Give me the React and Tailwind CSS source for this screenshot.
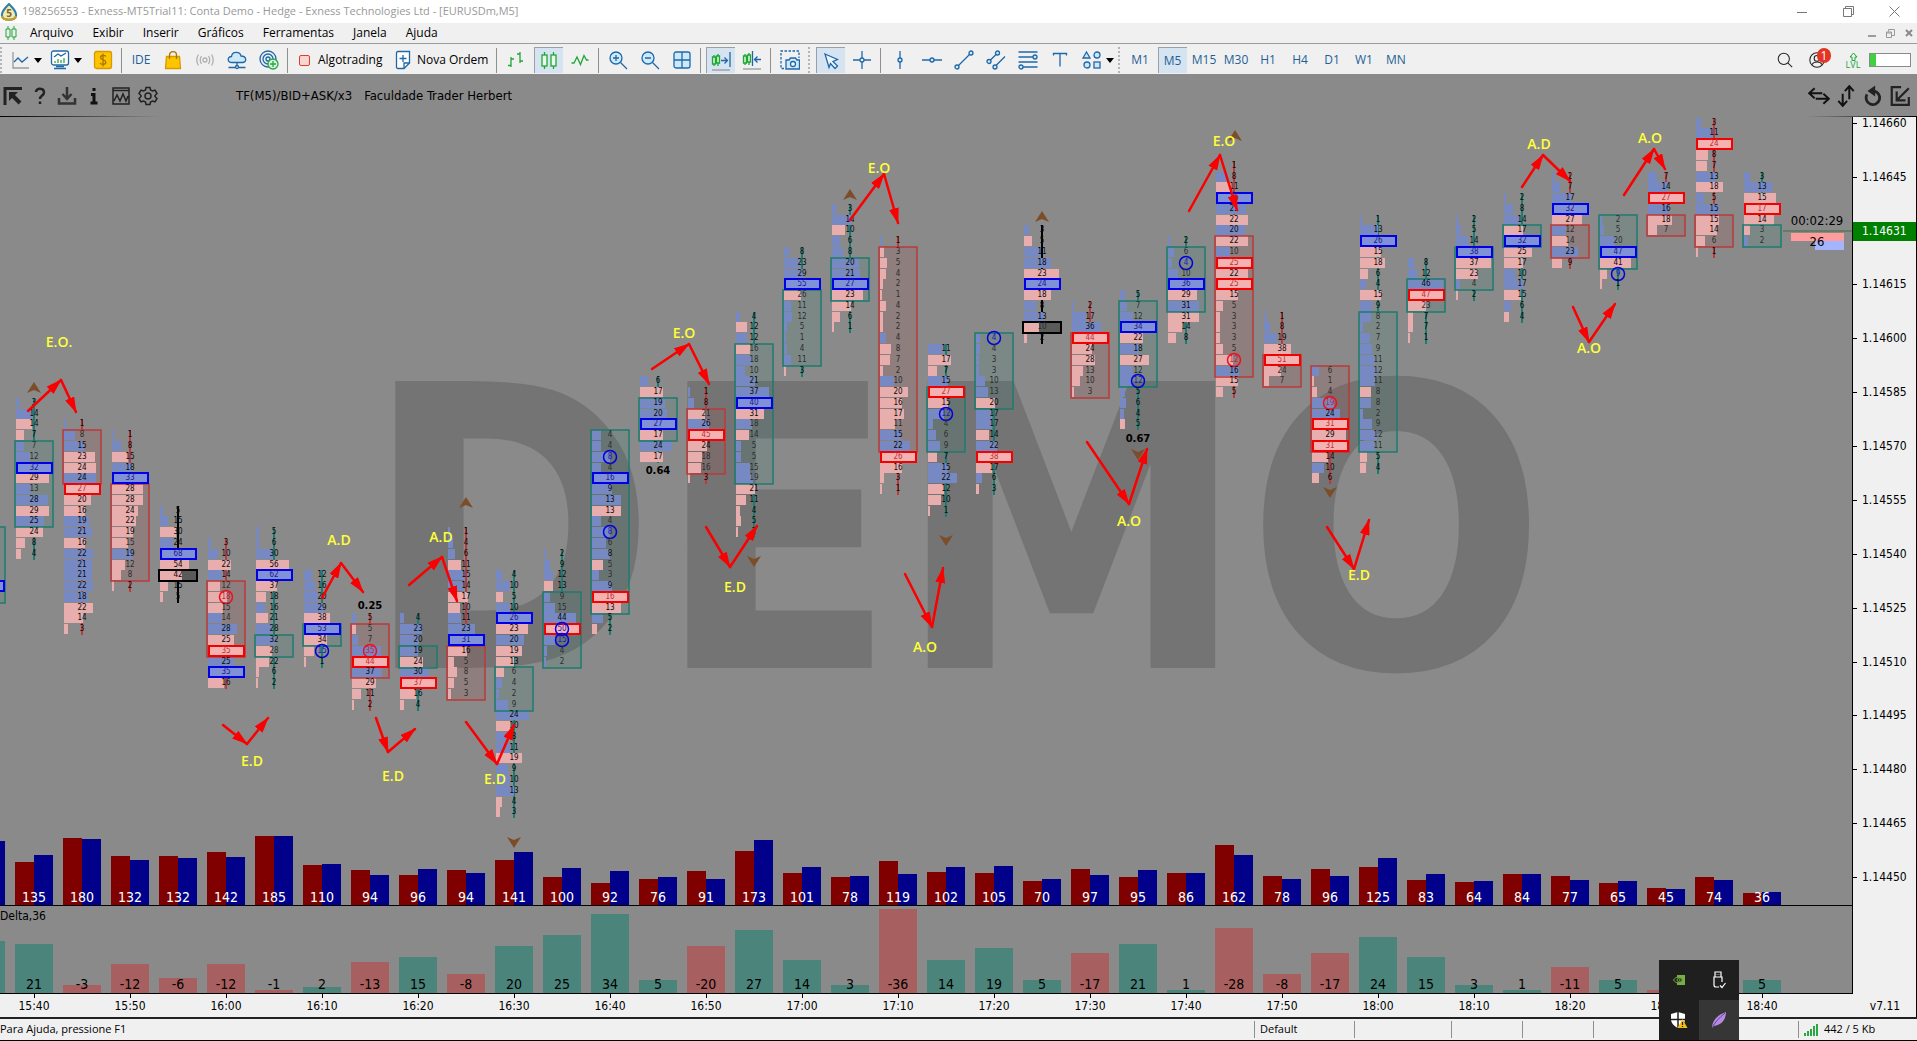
import React from 'react';
import clsx from 'clsx';

const COL_STEP = 48;
const COL_CENTER = 34;
const PLOT_TOP = 117;
const VOLUME_BASE = 906;

// b = buy row, p = sell row, upper case = point of control,
// trailing "o" = blue imbalance ring, trailing "r" = red imbalance ring
const COLUMNS = [
  { col: -1, row: 38, tone: 'up', body: [0, 6], cells: 'b4 b4 b5 b6 b8 B20 b9' },
  { col: 0, row: 26, tone: 'up', body: [4, 11], cells: 'b3 b14 p14 p7 b7 b12 B32 p29 b13 b28 p29 b25 p24 p8 p4' },
  { col: 1, row: 28, tone: 'down', body: [1, 5], cells: 'b1 b8 b15 p23 p24 b24 P27 p20 p16 b19 b21 p16 b22 b21 b21 b22 b18 p22 p14 p3' },
  { col: 2, row: 29, tone: 'down', body: [5, 13], cells: 'b1 b8 p15 b18 B33 p28 p28 p24 p22 p19 p15 b19 p12 p8 p2' },
  { col: 3, row: 36, tone: 'flat', body: [6, 6], cells: 'b5 b15 p30 b24 B68 p54 p42 p15 p5' },
  { col: 4, row: 39, tone: 'down', body: [4, 10], cells: 'b3 b10 p22 b14 p12 p18r p15 b14 b28 p25 P35 b25 B35 p16' },
  { col: 5, row: 38, tone: 'up', body: [10, 11], cells: 'b5 b6 b30 p56 B62 p37 p18 b16 p21 b28 b32 p28 p22 p6 p2' },
  { col: 6, row: 42, tone: 'up', body: [5, 6], cells: 'b12 b16 b20 b29 p38 B53 p34 p15o p1' },
  { col: 7, row: 46, tone: 'down', body: [1, 5], cells: 'b5 p5 b7 b35r P44 b37 p29 p11 p2' },
  { col: 8, row: 46, tone: 'up', body: [3, 4], cells: 'b4 b23 b20 b19 p24 b30 P37 p16 p4' },
  { col: 9, row: 38, tone: 'down', body: [11, 15], cells: 'b1 b4 b6 p11 b15 b14 p17 p10 b11 b23 B31 p16 p5 p8 p5 p3' },
  { col: 10, row: 42, tone: 'up', body: [9, 12], cells: 'b4 b10 p5 b10 B26 p23 b20 p19 p13 p6 b4 b2 b9 b24 p10 b8 b11 p19 b9 b10 b13 p4 p3' },
  { col: 11, row: 40, tone: 'up', body: [4, 10], cells: 'b2 b9 b12 p13 b9 b15 b44 P50o b15o b4 b2' },
  { col: 12, row: 29, tone: 'up', body: [0, 16], cells: 'b4 b4 b8o b4 B16 b9 b13 p13 b4 b8o b6 b8 p5 b3 b9 P16 p13 b5 p2' },
  { col: 13, row: 24, tone: 'up', body: [2, 5], cells: 'b6 p17 b19 b20 B27 p17 b24 p17' },
  { col: 14, row: 25, tone: 'down', body: [2, 7], cells: 'b1 b8 p21 b26 P45 p24 p18 p16 p3' },
  { col: 15, row: 18, tone: 'up', body: [3, 15], cells: 'b4 p12 b12 p16 b18 b10 b21 b37 B40 p31 b18 p14 b5 b5 b15 b19 p21 p11 p4 p5 p2' },
  { col: 16, row: 12, tone: 'up', body: [4, 10], cells: 'b8 b23 b29 B55 p26 b11 b12 b5 b1 b4 b11 p3' },
  { col: 17, row: 8, tone: 'up', body: [5, 8], cells: 'b3 b14 p10 b6 b8 b20 b21 B27 p23 p14 p6 p1' },
  { col: 18, row: 11, tone: 'down', body: [1, 19], cells: 'b1 p3 p5 p4 p2 p1 p4 p2 p2 b4 p8 p7 p2 b10 p20 p16 p17 p11 b15 b22 P26 p16 p3 p1' },
  { col: 19, row: 21, tone: 'up', body: [4, 9], cells: 'b11 p17 p7 b15 P27 p15 b12o b4 b6 b9 p7 b15 b22 p12 p10 p1' },
  { col: 20, row: 20, tone: 'up', body: [0, 6], cells: 'b4o b4 b3 b3 b10 b13 p20 b17 b17 p14 b22 P38 p17 b6 p3' },
  { col: 21, row: 10, tone: 'flat', body: [9, 9], cells: 'b3 p5 b11 b18 p23 B24 p18 b8 b13 p10 p2' },
  { col: 22, row: 17, tone: 'down', body: [3, 8], cells: 'b2 b17 b36 P44 p24 p28 p13 p10 p3' },
  { col: 23, row: 16, tone: 'up', body: [1, 8], cells: 'b5 b7 b12 B34 p22 b18 p27 b12 b12o b5 b6 b4 p5' },
  { col: 24, row: 11, tone: 'up', body: [1, 6], cells: 'b2 b6 b4o b10 B36 p29 b31 p31 p14 p8' },
  { col: 25, row: 4, tone: 'down', body: [7, 19], cells: 'b1 b8 p11 B25 b21 p22 b20 p22 b10 P25 p22 P25 p15 p5 p3 p3 p3 p5 p12r b16 p15 p5' },
  { col: 26, row: 18, tone: 'down', body: [4, 6], cells: 'b1 b8 b19 p38 P51 p24 p7' },
  { col: 27, row: 23, tone: 'down', body: [0, 7], cells: 'b6 p1 p4 b19r b24 P31 p29 P31 p14 b10 p6' },
  { col: 28, row: 9, tone: 'up', body: [9, 21], cells: 'b1 b13 B26 p15 p18 p6 b4 p15 b9 b8 b2 b7 b9 b11 b12 b11 p8 b8 b2 b9 b12 b11 p5 p4' },
  { col: 29, row: 13, tone: 'up', body: [2, 4], cells: 'b8 b12 b46 P47 p23 p7 p7 p1' },
  { col: 30, row: 9, tone: 'up', body: [3, 6], cells: 'b2 b5 b14 B38 p37 p23 b4 p2' },
  { col: 31, row: 7, tone: 'up', body: [3, 4], cells: 'b2 b8 b14 p17 B32 p25 p17 b10 b17 p15 b6 p4' },
  { col: 32, row: 5, tone: 'down', body: [5, 7], cells: 'b2 b7 b17 B32 p27 b12 p14 b23 p9' },
  { col: 33, row: 9, tone: 'up', body: [0, 4], cells: 'b2 b5 b20 B47 p41 p9o p1' },
  { col: 34, row: 5, tone: 'down', body: [4, 5], cells: 'b7 b14 P27 b16 p18 p7' },
  { col: 35, row: 0, tone: 'down', body: [9, 11], cells: 'b3 b11 P24 p8 p7 b13 p18 b5 b15 p15 p14 p6 p1' },
  { col: 36, row: 5, tone: 'up', body: [5, 6], cells: 'b3 b13 p15 P17 p14 p3 b2' },
];

// [total volume, sell bar height, buy bar height, delta]
const BARS = [
  [135, 44, 51, 21], [180, 68, 67, -3], [132, 50, 46, -12], [132, 50, 48, -6], [142, 54, 49, -12],
  [185, 70, 70, -1], [110, 41, 42, 2], [94, 36, 31, -13], [96, 31, 37, 15], [94, 36, 33, -8],
  [141, 46, 54, 20], [100, 29, 38, 25], [92, 23, 35, 34], [76, 27, 29, 5], [91, 35, 27, -20],
  [173, 55, 66, 27], [101, 33, 39, 14], [78, 29, 30, 3], [119, 45, 32, -36], [102, 34, 39, 14],
  [105, 33, 40, 19], [70, 25, 27, 5], [97, 37, 31, -17], [95, 29, 36, 21], [86, 33, 33, 1],
  [162, 61, 51, -28], [78, 30, 27, -8], [96, 37, 30, -17], [125, 39, 48, 24], [83, 26, 32, 15],
  [64, 24, 25, 3], [84, 32, 32, 1], [77, 30, 26, -11], [65, 23, 25, 5], [45, 18, 17, -1],
  [74, 29, 26, 2], [36, 13, 14, 5],
];

const TIMES = [
  '15:40', '15:50', '16:00', '16:10', '16:20', '16:30', '16:40', '16:50', '17:00', '17:10',
  '17:20', '17:30', '17:40', '17:50', '18:00', '18:10', '18:20', '18:30', '18:40',
];

const PRICES = [
  '1.14660', '1.14645', '1.14630', '1.14615', '1.14600', '1.14585', '1.14570', '1.14555',
  '1.14540', '1.14525', '1.14510', '1.14495', '1.14480', '1.14465', '1.14450',
];

const NOTES = [
  ['E.O.', 59, 342], ['A.D', 339, 540], ['E.D', 252, 761], ['E.D', 393, 776], ['A.D', 441, 537],
  ['E.D', 495, 779], ['E.D', 735, 587], ['E.O', 684, 333], ['E.O', 879, 168], ['E.O', 1224, 141],
  ['A.O', 1129, 521], ['A.O', 925, 647], ['E.D', 1359, 575], ['A.D', 1539, 144], ['A.O', 1650, 138],
  ['A.O', 1589, 348],
];

const SWINGS = [
  [28, 411, 61, 380, 76, 412], [322, 598, 341, 563, 363, 592], [223, 725, 247, 744, 268, 718],
  [376, 718, 388, 752, 415, 729], [409, 585, 442, 557, 457, 601], [466, 722, 497, 764, 514, 725],
  [706, 527, 730, 567, 757, 526], [652, 369, 689, 344, 709, 384], [850, 220, 884, 174, 898, 223],
  [1189, 211, 1220, 155, 1237, 210], [1087, 442, 1129, 504, 1147, 449], [905, 574, 932, 627, 943, 568],
  [1327, 527, 1354, 569, 1369, 520], [1522, 187, 1543, 155, 1570, 181], [1624, 195, 1654, 149, 1665, 169],
  [1573, 307, 1589, 342, 1615, 304],
];

const FRACTALS_UP = [[34, 388], [466, 503], [850, 195], [1042, 217], [1235, 136]];
const FRACTALS_DOWN = [[514, 842], [754, 561], [946, 540], [1138, 454], [1330, 492]];
const RATIOS = [['0.25', 370, 605], ['0.64', 658, 470], ['0.67', 1138, 438]];

const TONES = {
  up: { line: '#1c7c6f', fill: '#1c7c6f', alpha: 0.12 },
  down: { line: '#bb3a3a', fill: '#a05050', alpha: 0.2 },
  flat: { line: '#000000', fill: '#000000', alpha: 0.35 },
};

const rowY = (row) => Math.round(122.7 + row * 10.776);

const parseCells = (cells) =>
  cells.split(' ').map((cell) => {
    const [, side, value, ring] = cell.match(/^([bpBP])(\d+)([or]?)$/);
    return {
      buy: side.toLowerCase() === 'b',
      poc: side === side.toUpperCase(),
      value: Number(value),
      ring,
    };
  });

const Cluster = ({ col, row, tone, body, cells }) => {
  const rows = parseCells(cells);
  const max = Math.max(...rows.map((r) => r.value));
  const cx = COL_CENTER + col * COL_STEP;
  const left = cx - 18;
  const top = rowY(row) - 5;
  const bottom = rowY(row + rows.length - 1) + 6;
  const bodyTop = rowY(row + body[0]) - 5;
  const bodyBottom = rowY(row + body[1]) + 6;
  const { line, fill, alpha } = TONES[tone];

  return (
    <g>
      <path
        d={`M${cx} ${top}V${bodyTop}M${cx} ${bodyBottom}V${bottom}`}
        stroke={line}
        strokeWidth={2}
      />
      <rect x={left - 1} y={bodyTop} width={38} height={bodyBottom - bodyTop} fill={fill} fillOpacity={alpha} />
      {rows.map((r, i) => (
        <rect
          key={i}
          x={left}
          y={rowY(row + i) - 5}
          width={Math.max(2, Math.round((36 * r.value) / max))}
          height={10}
          fill={r.buy ? '#7789c2' : '#e8adad'}
        />
      ))}
      <rect x={left - 1} y={bodyTop} width={38} height={bodyBottom - bodyTop} fill="none" stroke={line} strokeWidth={tone === 'flat' ? 2 : 1.5} />
      {rows.map((r, i) => {
        const y = rowY(row + i);
        const soft = i >= body[0] && i <= body[1] && r.value / max < 0.5;
        let ink = soft ? '#2c2c2c' : '#0a0a0a';
        if (r.poc) ink = r.buy ? '#1a1a8c' : '#c03030';
        if (r.ring) ink = r.ring === 'o' ? '#1a1ac0' : '#c8203a';
        return (
          <g key={i}>
            {r.poc && (
              <rect x={left + 1} y={y - 5} width={35} height={10} fill={r.buy ? '#8a9aee' : '#ffb8b8'} fillOpacity={0.5} stroke={r.buy ? '#0000e6' : '#f40000'} strokeWidth={2} />
            )}
            {cx > 0 && (
              <text x={cx} y={y + 2} textAnchor="middle" fontSize={8} fill={ink}>
                {r.value}
              </text>
            )}
            {r.ring && <circle cx={cx} cy={y} r={6.5} fill="none" stroke={r.ring === 'o' ? '#0000e0' : '#f01020'} strokeWidth={1.5} />}
          </g>
        );
      })}
    </g>
  );
};

const PricePlot = () => (
  <svg className="absolute inset-0 h-full w-full" fontFamily="'DejaVu Sans Condensed', 'Noto Sans', sans-serif">
    <defs>
      <marker id="swing-head" viewBox="0 0 16 10" refX="15" refY="5" markerWidth="16" markerHeight="10" markerUnits="userSpaceOnUse" orient="auto">
        <path d="M0 0L16 5L0 10Z" fill="#fa0000" />
      </marker>
    </defs>
    <g transform={`translate(0 ${-PLOT_TOP})`}>
      <text x={364} y={667} fontSize={391} fontWeight={700} fill="#747474" stroke="#747474" strokeWidth={2}>
        DEMO
      </text>

      {FRACTALS_UP.map(([x, y]) => (
        <path key={x} d={`M${x} ${y - 6}L${x + 7} ${y + 5}L${x} ${y + 2}L${x - 7} ${y + 5}Z`} fill="#7c4d29" />
      ))}
      {FRACTALS_DOWN.map(([x, y]) => (
        <path key={x} d={`M${x} ${y + 6}L${x + 7} ${y - 5}L${x} ${y - 2}L${x - 7} ${y - 5}Z`} fill="#7c4d29" />
      ))}

      {COLUMNS.map((column) => (
        <Cluster key={column.col} {...column} />
      ))}

      {RATIOS.map(([label, x, y]) => (
        <text key={label} x={x} y={y + 4} textAnchor="middle" fontSize={10} fontWeight={700} fontFamily="'DejaVu Sans', sans-serif">
          {label}
        </text>
      ))}

      {SWINGS.map(([x1, y1, x2, y2, x3, y3]) => (
        <g key={x1} stroke="#fa0000" strokeWidth={2.5} strokeLinecap="round">
          <line x1={x1} y1={y1} x2={x2} y2={y2} markerEnd="url(#swing-head)" />
          <line x1={x2} y1={y2} x2={x3} y2={y3} markerEnd="url(#swing-head)" />
        </g>
      ))}
      {NOTES.map(([label, x, y]) => (
        <text key={x} x={x} y={y + 5} textAnchor="middle" fontSize={14} fontWeight={600} fill="#ffff38" fontFamily="'Open Sans', 'Noto Sans', sans-serif">
          {label}
        </text>
      ))}

      {/* volume histogram */}
      <rect x={-14} y={VOLUME_BASE - 65} width={19} height={65} fill="#00008b" />
      {BARS.map(([total, sell, buy], i) => {
        const x = COL_CENTER + i * COL_STEP;
        return (
          <g key={i}>
            <rect x={x - 19} y={VOLUME_BASE - sell} width={19} height={sell} fill="#800000" />
            <rect x={x} y={VOLUME_BASE - buy} width={19} height={buy} fill="#00008b" />
            <text x={x} y={902} textAnchor="middle" fontSize={14} fill="#ffffff">
              {total}
            </text>
          </g>
        );
      })}

      {/* last price */}
      <line x1={1783} y1={231} x2={1900} y2={231} stroke="#3f6f3f" />
      <text x={1817} y={225} textAnchor="middle" fontSize={13}>00:02:29</text>
      <rect x={1791} y={233} width={53} height={8} fill="#ff9c9c" />
      <rect x={1815} y={241} width={29} height={9} fill="#a4b4ff" />
      <text x={1817} y={246} textAnchor="middle" fontSize={13}>26</text>
    </g>
  </svg>
);

const DeltaPlot = () => (
  <svg className="absolute inset-0 h-full w-full" fontFamily="'DejaVu Sans Condensed', 'Noto Sans', sans-serif">
    <text x={0} y={14} fontSize={12}>Delta,36</text>
    <rect x={-33} y={35} width={38} height={52} fill="#4b847b" />
    {BARS.map(([, , , delta], i) => {
      const x = COL_CENTER + i * COL_STEP;
      const height = Math.round(Math.abs(delta) * 2.3 + 1);
      return (
        <g key={i}>
          <rect x={x - 19} y={87 - height} width={38} height={height} fill={delta > 0 ? '#4b847b' : '#a85f5f'} />
          <text x={x} y={83} textAnchor="middle" fontSize={14}>
            {delta}
          </text>
        </g>
      );
    })}
  </svg>
);

const PriceAxis = () => (
  <div className="relative w-[65px] shrink-0 border-r border-l border-black bg-[#f0f0f0]">
    <svg className="absolute inset-0 h-full w-full" fontFamily="'DejaVu Sans Condensed', 'Noto Sans', sans-serif" fontSize={12}>
      {PRICES.filter((price) => price !== '1.14630').map((price) => {
        const y = rowY(PRICES.indexOf(price) * 5) - PLOT_TOP;
        return (
          <g key={price}>
            <line x1={0} y1={y + 0.5} x2={4} y2={y + 0.5} stroke="#000" />
            <text x={9} y={y + 4}>{price}</text>
          </g>
        );
      })}
      <rect x={0} y={105} width={64} height={19} fill="#008000" />
      <text x={9} y={118} fill="#ffffff">1.14631</text>
    </svg>
  </div>
);

const TimeAxis = () => (
  <div className="relative h-[23px] shrink-0 border-r border-black bg-[#f0f0f0]">
    <svg className="absolute inset-0 h-full w-full" fontFamily="'DejaVu Sans Condensed', 'Noto Sans', sans-serif" fontSize={12}>
      {TIMES.map((time, i) => {
        const x = COL_CENTER + i * COL_STEP * 2;
        return (
          <g key={time}>
            <line x1={x + 0.5} y1={0} x2={x + 0.5} y2={4} stroke="#000" />
            <text x={x} y={16} textAnchor="middle">{time}</text>
          </g>
        );
      })}
      <text x={1885} y={16} textAnchor="middle">v7.11</text>
    </svg>
  </div>
);

const Icon = ({ children, size = 20, stroke = '#1f68a8', width = 1.3 }) => (
  <svg width={size} height={size} viewBox="0 0 20 20" fill="none" stroke={stroke} strokeWidth={width} className="shrink-0">
    {children}
  </svg>
);

const Caret = () => (
  <svg width="8" height="5" viewBox="0 0 8 5" className="shrink-0">
    <path d="M0 0H8L4 5Z" fill="#000" />
  </svg>
);

const Tool = ({ label, active, wide, children }) => (
  <button
    type="button"
    aria-label={label}
    className={clsx('flex h-full shrink-0 items-center justify-center', wide ? 'w-10 gap-1 pl-1' : 'w-8')}
  >
    <span
      className={clsx(
        'flex h-[26px] items-center justify-center',
        active ? 'w-[29px] border-t border-l border-[#9aa0a8] bg-[#d6e3f1]' : 'gap-1'
      )}
    >
      {children}
    </span>
  </button>
);

const Sep = () => (
  <div className="flex h-full w-1.5 shrink-0 items-center pl-0.5">
    <div className="h-[25px] w-px bg-[#8f8f8f]" />
  </div>
);

const Grip = () => (
  <div className="flex h-full w-2 shrink-0 items-center pl-0.5">
    <div className="h-[26px] border-l-2 border-dotted border-[#b4b4b4]" />
  </div>
);

const LIGHT = '#cde9fb';

const Toolbar = () => (
  <div className="flex h-[30px] shrink-0 items-center bg-[#f0f0f0] pt-0.5 text-[#1f5f96]">
    <div className="h-[26px] w-1 shrink-0 border-l-2 border-dotted border-[#b4b4b4]" />
    <Tool label="Tipo de linha" wide>
      <Icon>
        <path d="M3 2V18H19" stroke="#9a9a9a" />
        <path d="M4 12L8 8L12 12L18 7" />
      </Icon>
      <Caret />
    </Tool>
    <Tool label="Indicadores" wide>
      <Icon>
        <rect x="1.500" y="1" width="17" height="14" rx="2" fill="#fff" />
        <path d="M4 18.500H16M6 16.500H14" />
        <path d="M4 7L8 4L11 6L16 3" />
        <path d="M5 13V11M8 13V9M11 13V10M14 13V8" stroke="#2fa84a" />
      </Icon>
      <Caret />
    </Tool>
    <div className="w-[3px] shrink-0" />
    <Tool label="Mercado">
      <Icon stroke="#d59a00">
        <rect x="1.500" y="1.500" width="17" height="17" rx="2" fill="#fdc500" />
        <path d="M13 6.500C12 5 7.500 5 7.500 7.500C7.500 10.500 12.800 9.300 12.800 12.300C12.800 15 8 15 7 13M10 3.500V16.500" stroke="#a87500" />
      </Icon>
    </Tool>
    <Sep />
    <Tool label="MetaEditor">
      <span className="text-xs">IDE</span>
    </Tool>
    <Tool label="Loja">
      <Icon stroke="#d59a00">
        <path d="M3.500 6.500H16.500L17.500 18.500H2.500Z" fill="#fdc500" />
        <path d="M6.500 9V5C6.500 0.500 13.500 0.500 13.500 5V9" stroke="#a87500" />
      </Icon>
    </Tool>
    <Tool label="Sinais">
      <Icon stroke="#b0b0b0">
        <circle cx="10" cy="10" r="2" />
        <path d="M6.500 6Q4 10 6.500 14M13.500 6Q16 10 13.500 14M3.500 4.500Q0 10 3.500 15.500M16.500 4.500Q20 10 16.500 15.500" />
      </Icon>
    </Tool>
    <Tool label="VPS">
      <Icon>
        <path d="M5 12.500C0 12.500 0 6.500 4.500 6.500C5 1 13 1 14 6C20 6 20 12.500 15.500 12.500Z" fill={LIGHT} />
        <path d="M10 12.500V16M1.500 17.500H8.500M11.500 17.500H18.500" />
        <circle cx="10" cy="17" r="1.500" />
      </Icon>
    </Tool>
    <Tool label="Copiar">
      <Icon>
        <circle cx="9" cy="9" r="8" />
        <circle cx="9" cy="9" r="5" />
        <circle cx="9" cy="9" r="2" fill={LIGHT} />
        <circle cx="14" cy="14" r="5" fill="#d9f5de" stroke="#28a745" />
        <path d="M14 11V17M11 14H17" stroke="#28a745" />
      </Icon>
    </Tool>
    <Sep />
    <button type="button" className="flex h-full w-[98px] shrink-0 items-center gap-2 pl-2 text-black">
      <span className="h-[11px] w-[11px] rounded-[2px] border border-[#d9412e] bg-[#fbd5cf]" />
      <span className="text-xs whitespace-nowrap">Algotrading</span>
    </button>
    <button type="button" className="flex h-full w-[105px] shrink-0 items-center gap-1 pl-1 text-black">
      <Icon>
        <path d="M5 1.500H16.500V13L11 18.500H5Q3.500 18.500 3.500 17V3Q3.500 1.500 5 1.500Z" fill="#fff" />
        <path d="M16.500 13H11V18.500M10 5V12M6.500 8.500H13.500" />
      </Icon>
      <span className="text-xs whitespace-nowrap">Nova Ordem</span>
    </button>
    <Sep />
    <Tool label="Barras">
      <Icon stroke="#1fa637">
        <path d="M5 7V17M2 15.500H5M5 9H8M14 2V13M11 4H14M14 11H17" />
      </Icon>
    </Tool>
    <Tool label="Velas" active>
      <Icon stroke="#1fa637">
        <path d="M5.500 1V4M5.500 15V18M14.500 1V4M14.500 15V18" />
        <rect x="3" y="4" width="5" height="11" fill="#e8fbe9" />
        <rect x="12" y="4" width="5" height="11" fill="#e8fbe9" />
      </Icon>
    </Tool>
    <Tool label="Linha">
      <Icon stroke="#1fa637">
        <path d="M1.500 13H4L7 7L10.500 14.500L14 5.500L16.500 10H18.500" />
      </Icon>
    </Tool>
    <Sep />
    <Tool label="Ampliar">
      <Icon>
        <circle cx="8" cy="8" r="6" fill={LIGHT} />
        <path d="M12.500 12.500L19 19M8 5V11M5 8H11" />
      </Icon>
    </Tool>
    <Tool label="Reduzir">
      <Icon>
        <circle cx="8" cy="8" r="6" fill={LIGHT} />
        <path d="M12.500 12.500L19 19M5 8H11" />
      </Icon>
    </Tool>
    <Tool label="Janelas">
      <Icon>
        <rect x="2" y="2" width="16" height="16" rx="2" fill={LIGHT} />
        <path d="M10 2V18M2 10H18" />
      </Icon>
    </Tool>
    <Sep />
    <Tool label="Rolagem automática" active>
      <Icon>
        <path d="M3 4V15M7 3V15" stroke="#1fa637" />
        <path d="M1.500 6H4.500V13H1.500ZM5.500 5H8.500V12H5.500Z" fill="#c9f3cc" stroke="#1fa637" />
        <path d="M10 9.500H16M13.500 6.500L16.500 9.500L13.500 12.500M19 1V16" />
        <path d="M1 19H19" stroke="#9a9a9a" />
      </Icon>
    </Tool>
    <Tool label="Deslocar gráfico">
      <Icon>
        <path d="M3 4V15M7 3V15" stroke="#1fa637" />
        <path d="M1.500 6H4.500V13H1.500ZM5.500 5H8.500V12H5.500Z" fill="#c9f3cc" stroke="#1fa637" />
        <path d="M19 9.500H13M15.500 6.500L12.500 9.500L15.500 12.500M10.500 1V16" />
        <path d="M1 19H19" stroke="#9a9a9a" />
      </Icon>
    </Tool>
    <Sep />
    <Tool label="Captura">
      <Icon>
        <path d="M4 18.500H1V1H19V8" strokeDasharray="2.500 1.500" />
        <path d="M6 10H9L10.500 8H15.500L17 10H19.500V19H6Z" fill={LIGHT} />
        <circle cx="13" cy="14" r="2.500" fill="#fff" />
      </Icon>
    </Tool>
    <Grip />
    <Tool label="Cursor" active>
      <Icon>
        <path d="M4 3L16.500 8.500L12 10.500L16.500 15L14 17.500L9.500 12.500L8 16.500Z" fill="#eef6fd" />
      </Icon>
    </Tool>
    <Tool label="Mira">
      <Icon>
        <path d="M10 1V8M10 12V19M1 10H8M12 10H19" />
        <circle cx="10" cy="10" r="2" />
      </Icon>
    </Tool>
    <Sep />
    <Tool label="Linha vertical">
      <Icon>
        <path d="M10 1V8M10 12V19" />
        <circle cx="10" cy="10" r="2" fill={LIGHT} />
      </Icon>
    </Tool>
    <Tool label="Linha horizontal">
      <Icon>
        <path d="M0 10H8M12 10H20" />
        <circle cx="10" cy="10" r="2" fill={LIGHT} />
      </Icon>
    </Tool>
    <Tool label="Linha de tendência">
      <Icon>
        <path d="M4.500 15.500L15.500 4.500" />
        <circle cx="3" cy="17" r="2" fill={LIGHT} />
        <circle cx="17" cy="3" r="2" fill={LIGHT} />
      </Icon>
    </Tool>
    <Tool label="Canal">
      <Icon>
        <path d="M4 10.500L10.500 4M10 15.500L19 6.500" />
        <circle cx="3" cy="11.500" r="2" fill={LIGHT} />
        <circle cx="11.500" cy="3" r="2" fill={LIGHT} />
        <circle cx="9" cy="17" r="2" fill={LIGHT} />
      </Icon>
    </Tool>
    <Tool label="Fibonacci">
      <Icon>
        <path d="M0.500 2H19.500M0.500 7H15M0.500 12H19.500M5 17H19.500" />
        <circle cx="17" cy="7" r="2" fill={LIGHT} />
        <circle cx="3" cy="17" r="2" fill={LIGHT} />
      </Icon>
    </Tool>
    <Tool label="Texto">
      <Icon>
        <path d="M3.500 5.500V3.500H16.500V5.500M10 3.500V16.500" />
      </Icon>
    </Tool>
    <Tool label="Formas" wide>
      <Icon>
        <path d="M4.500 2L8 8H1Z" fill={LIGHT} />
        <circle cx="15" cy="5" r="3" fill={LIGHT} />
        <circle cx="5" cy="15" r="3" fill={LIGHT} />
        <rect x="12" y="12" width="6" height="6" fill={LIGHT} />
      </Icon>
      <Caret />
    </Tool>
    <Grip />
    {['M1', 'M5', 'M15', 'M30', 'H1', 'H4', 'D1', 'W1', 'MN'].map((frame) => (
      <Tool key={frame} label={frame} active={frame === 'M5'}>
        <span className="text-xs">{frame}</span>
      </Tool>
    ))}

    <div className="ml-auto flex h-full shrink-0 items-center pr-1.5">
      <Tool label="Pesquisar">
        <Icon size={16} stroke="#222">
          <circle cx="8.500" cy="8.500" r="7" />
          <path d="M13.500 13.500L19 19" />
        </Icon>
      </Tool>
      <button type="button" aria-label="Conta" className="relative flex h-full w-10 items-center pl-2">
        <Icon size={16} stroke="#222">
          <circle cx="10" cy="10" r="9" />
          <circle cx="10" cy="8" r="3.500" />
          <path d="M3.500 16C6 11.500 14 11.500 16.500 16" />
        </Icon>
        <span className="absolute top-0.5 left-4 flex h-[15px] w-3.5 items-center justify-center rounded-full bg-[#e23523] text-xs text-white">1</span>
      </button>
      <div className="flex w-6 flex-col items-center text-[9px] leading-2 text-[#18a53a]">
        <svg width="9" height="9" viewBox="0 0 9 9" fill="none" stroke="currentColor">
          <path d="M3 8.500V5H1L4.500 1L8 5H6V8.500Z" />
        </svg>
        LVL
      </div>
      <div className="ml-1 h-3.5 w-[42px] border border-[#8a8a8a] bg-white">
        <div className="h-full w-1.5 bg-[#3fd13f]" />
      </div>
    </div>
  </div>
);

const TitleBar = () => (
  <div className="flex h-[23px] shrink-0 items-center bg-white text-[#999999]">
    <svg width="18" height="18" viewBox="0 0 18 18" className="shrink-0">
      <path d="M9 1C13 5 17 9 16 13C15 18 3 18 2 13C1 9 5 5 9 1Z" fill="#f2e9b8" stroke="#2f7fa8" strokeWidth="2" />
      <path d="M2 13C3 18 15 18 16 13" fill="none" stroke="#c9a227" strokeWidth="2" />
      <text x="9" y="14" textAnchor="middle" fontSize="10" fontWeight="700" fill="#7a6a20" fontFamily="'Open Sans', sans-serif">5</text>
    </svg>
    <span className="ml-1 text-[11px] whitespace-nowrap">
      198256553 - Exness-MT5Trial11: Conta Demo - Hedge - Exness Technologies Ltd - [EURUSDm,M5]
    </span>
    <div className="ml-auto flex h-full items-center">
      <button type="button" aria-label="Minimizar" className="flex h-full w-[46px] items-center justify-center">
        <svg width="10" height="10" fill="none" stroke="#777"><path d="M0 5.500H10" /></svg>
      </button>
      <button type="button" aria-label="Restaurar" className="flex h-full w-[46px] items-center justify-center">
        <svg width="11" height="11" fill="none" stroke="#777"><path d="M0.500 2.500H8.500V10.500H0.500ZM2.500 2.500V0.500H10.500V8.500H8.500" /></svg>
      </button>
      <button type="button" aria-label="Fechar" className="flex h-full w-[46px] items-center justify-center">
        <svg width="11" height="11" fill="none" stroke="#777"><path d="M0.500 0.500L10.500 10.500M10.500 0.500L0.500 10.500" /></svg>
      </button>
    </div>
  </div>
);

const MenuBar = () => (
  <nav className="flex h-[21px] shrink-0 items-center border-b border-[#9a9d9a] bg-[#f0f0f0] text-xs text-black">
    <svg width="12" height="14" viewBox="0 0 12 14" fill="none" stroke="#1fa637" className="ml-[5px] shrink-0">
      <path d="M3 0V3M3 11V14M9 0V3M9 11V14M1 3H5V11H1ZM7 3H11V11H7Z" />
    </svg>
    <div className="ml-[13px] flex gap-[19px]">
      {['Arquivo', 'Exibir', 'Inserir', 'Gráficos', 'Ferramentas', 'Janela', 'Ajuda'].map((item) => (
        <button key={item} type="button">{item}</button>
      ))}
    </div>
    <div className="ml-auto flex items-center gap-2.5 pr-1">
      <svg width="8" height="8" fill="none" stroke="#9a9a9a" strokeWidth="2"><path d="M0 7H8" /></svg>
      <svg width="9" height="9" fill="none" stroke="#9a9a9a"><path d="M0.500 3H5.500V8.500H0.500ZM0.500 4H5.500M2.500 2.500V0.500H8.500V6.500H6" /></svg>
      <svg width="8" height="8" fill="none" stroke="#8a8a8a" strokeWidth="2"><path d="M1 1L7 7M7 1L1 7" /></svg>
    </div>
  </nav>
);

const ChartHeader = () => (
  <div className="relative flex h-[43px] shrink-0 items-center bg-[#8a8a8a] text-[#222222]">
    <div className="flex items-center gap-[7px] pl-[3px]">
      <Icon stroke="#222" width={3}>
        <path d="M2 19V2.500H19" />
        <path d="M8 8L17 17" strokeWidth={4} />
        <path d="M6 6H15L6 15Z" fill="#222" stroke="none" />
      </Icon>
      <Icon stroke="#222" width={2.5}>
        <path d="M6 6C6 1.500 14 1.500 14 6.500C14 9.500 10 9.500 10 13M10 15.500V18" />
      </Icon>
      <Icon stroke="#333" width={2.5}>
        <path d="M10 1V12M5.500 8L10 13L14.500 8M2 12V17.500H18V12" />
      </Icon>
      <Icon stroke="#111" width={3}>
        <path d="M10 2V5M7 8.500H10V17M6.500 17H13.500" />
      </Icon>
      <Icon stroke="#222" width={1.5}>
        <path d="M2 2H18V18H2ZM2 4.500H18M3 15L6 9L9 15L12 8L15 15L17 10" />
      </Icon>
      <Icon stroke="#222" width={1.5}>
        <circle cx="10" cy="10" r="3" />
        <path d="M8 1.500H12L12.500 4L14.500 5L17 4.200L19 7.500L17 9.500V10.500L19 12.500L17 15.800L14.500 15L12.500 16L12 18.500H8L7.500 16L5.500 15L3 15.800L1 12.500L3 10.500V9.500L1 7.500L3 4.200L5.500 5L7.500 4Z" />
      </Icon>
    </div>
    <div className="ml-[78px] flex gap-3 font-['DejaVu_Sans_Condensed','Noto_Sans',sans-serif] text-[13px] whitespace-nowrap text-black">
      <span>TF(M5)/BID+ASK/x3</span>
      <span>Faculdade Trader Herbert</span>
    </div>
    <div className="ml-auto flex items-center gap-[5px] pr-1.5">
      <Icon size={22} stroke="#111" width={1.8}>
        <path d="M6 3L1 7.500L6 12M1 7.500H13M14 8L19 12.500L14 17M19 12.500H7" />
      </Icon>
      <Icon size={22} stroke="#111" width={1.8}>
        <path d="M9 5.500L13 1L17 5.500M13 1V13M3 14.500L7 19L11 14.500M7 19V8" />
      </Icon>
      <Icon size={22} stroke="#222" width={2.5}>
        <path d="M4.500 8.500A6.200 6.200 0 1 0 11 5.500" />
        <path d="M5 5.500L12 0.500V10.500Z" fill="#222" stroke="none" />
      </Icon>
      <Icon size={22} stroke="#222" width={2}>
        <path d="M11 2H2.500V18H18V11M18 3L8 13M7 6V14H15" />
      </Icon>
    </div>
    <div className="absolute bottom-0 left-0 h-px w-40 bg-linear-to-r from-black to-transparent" />
    <div className="absolute right-0 bottom-0 h-px w-28 bg-linear-to-l from-black to-transparent" />
  </div>
);

const StatusBar = () => (
  <footer className="flex h-[24px] shrink-0 items-stretch border-t-2 border-b border-t-[#222222] border-b-black bg-[#f0f0f0] text-[11px] text-black">
    <div className="flex flex-1 items-center">Para Ajuda, pressione F1</div>
    <div className="my-0.5 flex w-[100px] items-center border-l border-[#8f8f8f] pl-[5px]">Default</div>
    <div className="my-0.5 w-[97px] border-l border-[#8f8f8f]" />
    <div className="my-0.5 w-[71px] border-l border-[#8f8f8f]" />
    <div className="my-0.5 w-[71px] border-l border-[#8f8f8f]" />
    <div className="my-0.5 w-[205px] border-l border-[#8f8f8f]" />
    <div className="my-0.5 flex w-[119px] items-center gap-1.5 border-l border-[#8f8f8f] pl-[5px]">
      <svg width="14" height="12" fill="#28a745">
        <path d="M0 9H2V12H0ZM3 7H5V12H3ZM6 5H8V12H6ZM9 2H11V12H9ZM12 0H14V12H12Z" />
      </svg>
      442 / 5 Kb
    </div>
  </footer>
);

const TrayPopup = () => (
  <div className="absolute right-[178px] bottom-px grid h-20 w-20 grid-cols-2 grid-rows-2 place-items-center bg-[#1f1f1f]">
    <svg width="12" height="10" viewBox="0 0 12 10" fill="none">
      <rect x="4" width="8" height="10" fill="#76b043" />
      <path d="M0.500 5C3 1 7 1.500 9.500 5C7 8.500 3 9 0.500 5Z" fill="#1f1f1f" stroke="#76b043" />
      <circle cx="5.500" cy="5" r="1.500" stroke="#76b043" />
    </svg>
    <svg width="14" height="18" viewBox="0 0 14 18" fill="none" stroke="#fff" strokeWidth="1.200">
      <path d="M3 5.500V1H9V5.500M10 11V6H2V14Q2 16 4 16H7" />
      <path d="M5 3V3.500M7 3V3.500M8 14.500L10 16.500L13.500 12" />
    </svg>
    <svg width="18" height="18" viewBox="0 0 18 18">
      <path d="M8 1L15 3V8C15 13 11 15.500 8 17C5 15.500 1 13 1 8V3Z" fill="#fff" />
      <path d="M8 1V17M1 8.500H15" stroke="#1f1f1f" strokeWidth="1.500" />
      <path d="M12.500 8L17.500 17H7.500Z" fill="#f6bd16" />
      <path d="M12.500 11V14M12.500 15V16" stroke="#1f1f1f" strokeWidth="1.200" />
    </svg>
    <div className="flex h-full w-full items-center justify-center bg-[#363636]">
      <svg width="16" height="18" viewBox="0 0 16 18">
        <path d="M1 17C1 10 6 4 15 1C15 8 11 14 3 15Z" fill="#b48be0" />
        <path d="M1 17C4 11 8 7 14 2" stroke="#6a3fa0" fill="none" />
      </svg>
    </div>
  </div>
);

export default function App() {
  return (
    <div className="relative flex h-screen flex-col overflow-hidden bg-[#f0f0f0] font-['Open_Sans','Noto_Sans',sans-serif]">
      <TitleBar />
      <MenuBar />
      <Toolbar />
      <ChartHeader />
      <main className="flex min-h-0 flex-1">
        <div className="flex min-w-0 flex-1 flex-col bg-[#8a8a8a]">
          <div className="relative min-h-0 flex-1 overflow-hidden">
            <PricePlot />
          </div>
          <div className="relative h-[89px] shrink-0 overflow-hidden border-t border-b border-black">
            <DeltaPlot />
          </div>
        </div>
        <PriceAxis />
      </main>
      <TimeAxis />
      <StatusBar />
      <TrayPopup />
    </div>
  );
}
